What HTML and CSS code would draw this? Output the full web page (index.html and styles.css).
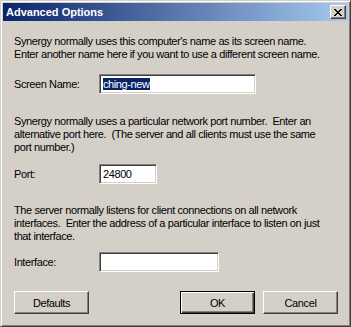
FILE: index.html
```html
<!DOCTYPE html>
<html lang="en">
<head>
    <meta charset="UTF-8">
    <title>Advanced Options</title>
    <link rel="stylesheet" href="styles.css">
</head>
<body>
  <div class="window">
    <div class="titlebar">
      <span class="title">Advanced Options</span>
      <button class="close" type="button" aria-label="Close">
        <svg width="8" height="7" viewBox="0 0 8 7">
          <path d="M0 0h2v1h1v1h2v-1h1v-1h2v1h-1v1h-1v1h-1v1h1v1h1v1h1v1h-2v-1h-1v-1h-2v1h-1v1h-2v-1h1v-1h1v-1h1v-1h-1v-1h-1v-1h-1z" fill="#000"/>
        </svg>
      </button>
    </div>
    <div class="content">
      <p class="text">Synergy normally uses this computer's name as its screen name.<br>Enter another name here if you want to use a different screen name.</p>
      <div class="row">
        <label class="label" for="screenName">Screen Name:</label>
        <div class="field name-field" id="screenName"><span class="selected">ching-new</span></div>
      </div>

      <p class="text gap-port">Synergy normally uses a particular network port number.&nbsp; Enter an<br>alternative port here.&nbsp; (The server and all clients must use the same<br>port number.)</p>
      <div class="row row-tight">
        <label class="label" for="port">Port:</label>
        <div class="field port-field" id="port">24800</div>
      </div>

      <p class="text gap-iface">The server normally listens for client connections on all network<br>interfaces.&nbsp; Enter the address of a particular interface to listen on just<br>that interface.</p>
      <div class="row row-tighter">
        <label class="label" for="iface">Interface:</label>
        <div class="field iface-field" id="iface"></div>
      </div>

      <div class="buttons">
        <button class="btn" type="button">Defaults</button>
        <span class="spacer"></span>
        <button class="btn default" type="button">OK</button>
        <button class="btn" type="button">Cancel</button>
      </div>
    </div>
  </div>
</body>
</html>
```

FILE: styles.css
```css
body {
    margin: 0;
    font-family: "Liberation Sans", Arial, sans-serif;
    font-size: 11px;
    letter-spacing: -0.4px;
    color: #000;
}
.window {
    width: 351px;
    height: 327px;
    box-sizing: border-box;
    background: #d4d0c8;
    border: 1px solid;
    border-color: #d4d0c8 #404040 #404040 #d4d0c8;
    box-shadow: inset 1px 1px #fff, inset -1px -1px #808080;
    padding: 2px;
}
.titlebar {
    height: 18px;
    display: flex;
    align-items: center;
    justify-content: space-between;
    padding: 0 2px 0 3px;
    background: linear-gradient(to right, #0a246a, #a6caf0);
}
.title {
    color: #fff;
    font-weight: bold;
    font-size: 11px;
    letter-spacing: 0;
}
.close {
    width: 16px;
    height: 14px;
    padding: 0;
    background: #d4d0c8;
    border: 1px solid;
    border-color: #fff #404040 #404040 #fff;
    box-shadow: inset -1px -1px #808080;
    display: flex;
    align-items: center;
    justify-content: center;
}
.content {
    padding: 14px 10px 0 11px;
}
.text {
    margin: 0;
    line-height: 13px;
    white-space: nowrap;
}
.row {
    display: flex;
    align-items: center;
    margin-top: 13px;
}
.row-tight {
    margin-top: 10px;
}
.row-tighter {
    margin-top: 9px;
}
.label {
    width: 85px;
}
.field {
    height: 20px;
    box-sizing: border-box;
    background: #fff;
    border: 1px solid;
    border-color: #808080 #fff #fff #808080;
    box-shadow: inset 1px 1px #404040, inset -1px -1px #d4d0c8;
    padding: 2px 2px 0 3px;
    line-height: 14px;
}
.name-field {
    width: 157px;
}
.port-field {
    width: 58px;
}
.iface-field {
    width: 120px;
}
.selected {
    background: #0a246a;
    color: #fff;
}
.gap-port {
    margin-top: 21px;
}
.gap-iface {
    margin-top: 20px;
}
.row + .buttons {
    margin-top: 19px;
}
.buttons {
    display: flex;
    gap: 8px;
}
.spacer {
    flex: 1;
}
.btn {
    width: 75px;
    height: 23px;
    font-family: inherit;
    font-size: 11px;
    letter-spacing: inherit;
    background: #d4d0c8;
    border: 1px solid;
    border-color: #fff #404040 #404040 #fff;
    box-shadow: inset -1px -1px #808080;
    padding: 0;
}
.default {
    border-color: #000;
    box-shadow: inset 1px 1px #fff, inset -1px -1px #404040, inset -2px -2px #808080;
}
```
